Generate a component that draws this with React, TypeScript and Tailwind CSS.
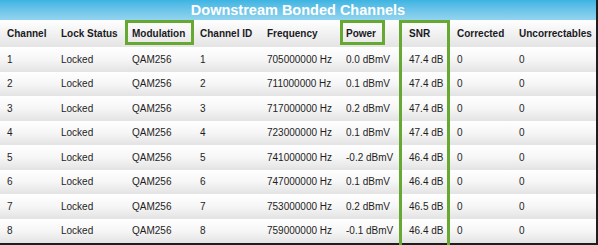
const cols = 'grid grid-cols-[54px_71px_68px_67px_79px_63px_48px_62px_1fr]'

const heads = ['Channel', 'Lock Status', 'Modulation', 'Channel ID', 'Frequency', 'Power', 'SNR', 'Corrected', 'Uncorrectables']

const rows = [
  ['1', 'Locked', 'QAM256', '1', '705000000 Hz', '0.0 dBmV', '47.4 dB', '0', '0'],
  ['2', 'Locked', 'QAM256', '2', '711000000 Hz', '0.1 dBmV', '47.4 dB', '0', '0'],
  ['3', 'Locked', 'QAM256', '3', '717000000 Hz', '0.2 dBmV', '47.4 dB', '0', '0'],
  ['4', 'Locked', 'QAM256', '4', '723000000 Hz', '0.1 dBmV', '47.4 dB', '0', '0'],
  ['5', 'Locked', 'QAM256', '5', '741000000 Hz', '-0.2 dBmV', '46.4 dB', '0', '0'],
  ['6', 'Locked', 'QAM256', '6', '747000000 Hz', '0.1 dBmV', '46.4 dB', '0', '0'],
  ['7', 'Locked', 'QAM256', '7', '753000000 Hz', '0.2 dBmV', '46.5 dB', '0', '0'],
  ['8', 'Locked', 'QAM256', '8', '759000000 Hz', '-0.1 dBmV', '46.4 dB', '0', '0'],
]

export default function App() {
  return (
    <div className="relative w-[598px] h-[245px] overflow-hidden bg-white font-['Liberation_Sans',Arial,sans-serif]">
      <div className="w-full h-full border-r-2 border-b-2 border-[#1e1e1e] flex flex-col">
        {/* title bar */}
        <div className="h-[20px] bg-gradient-to-b from-[#3cb4e2] to-[#92d4ef] flex items-center justify-center text-white font-bold text-[14.5px] leading-none">
          Downstream Bonded Channels
        </div>

        {/* column heads */}
        <div className={`${cols} h-[27px] items-center bg-gradient-to-b from-white to-[#e4e4e4] text-[10px] font-bold text-[#1a1a24]`}>
          {heads.map(h => <div key={h} className="pl-[7px] whitespace-nowrap">{h}</div>)}
        </div>

        {rows.map(r => (
          <div key={r[0]} className={`${cols} h-[24.5px] items-center bg-gradient-to-b from-white via-[#f6f6f6] to-[#e3e3e3] text-[10px] text-[#1e1e1e]`}>
            {r.map((c, i) => <div key={i} className="pl-[7px] whitespace-nowrap">{c}</div>)}
          </div>
        ))}
      </div>

      {/* highlight boxes */}
      <div className="absolute left-[125px] top-[20px] w-[69px] h-[25px] border-[3px] border-[#66a832]" />
      <div className="absolute left-[340px] top-[20px] w-[45px] h-[25px] border-[3px] border-[#66a832]" />
      <div className="absolute left-[399px] top-[20px] w-[51px] h-[240px] border-[3px] border-[#66a832]" />
    </div>
  )
}
